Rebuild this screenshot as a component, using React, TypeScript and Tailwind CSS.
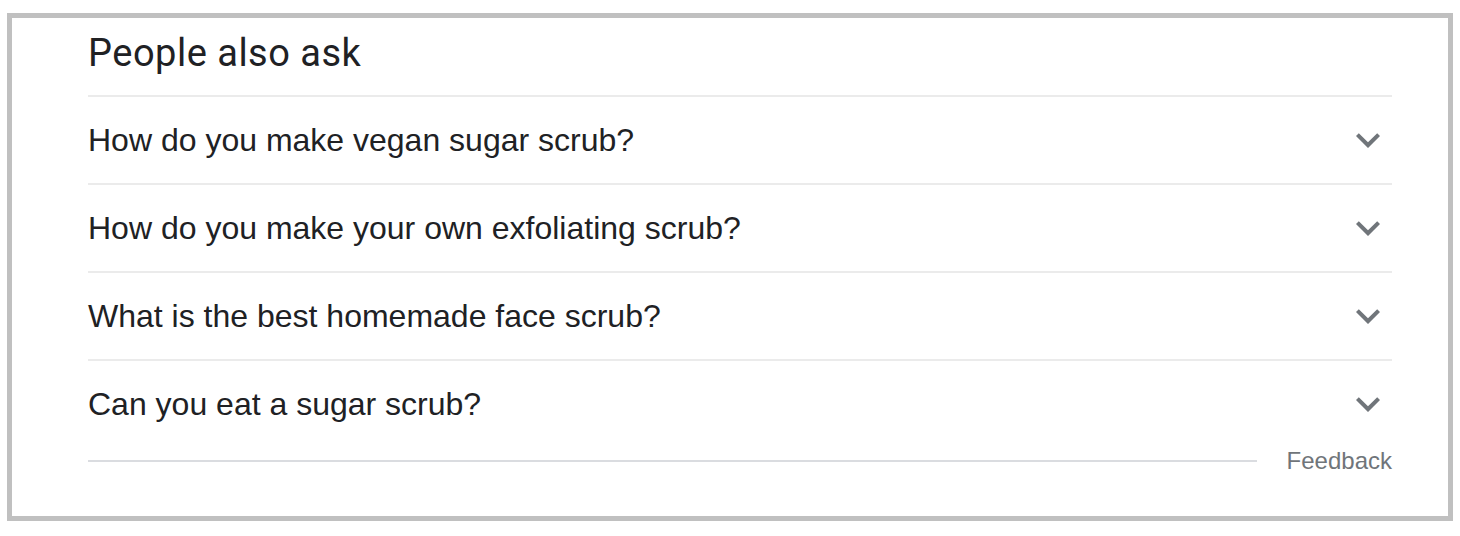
import React from "react";

const questions = [
  "How do you make vegan sugar scrub?",
  "How do you make your own exfoliating scrub?",
  "What is the best homemade face scrub?",
  "Can you eat a sugar scrub?",
];

function Chevron() {
  return (
    <svg width="48" height="48" viewBox="0 0 24 24" className="shrink-0">
      <path d="M16.59 8.59L12 13.17 7.41 8.59 6 10l6 6 6-6z" fill="#70757a" />
    </svg>
  );
}

export default function App() {
  return (
    <div className="min-h-[536px] w-[1460px] bg-white pt-[13px] pl-[7px]">
      <div className="w-[1446px] h-[508px] border-[5px] border-[#c0c0c0] bg-white pl-[76px] pr-[56px]">
        <div
          className="h-[77px] flex items-start pt-[11px] text-[38px] tracking-[0.5px] leading-[48px] text-[#202124]"
          style={{ fontFamily: "Roboto, 'Open Sans', sans-serif" }}
        >
          People also ask
        </div>
        <div style={{ fontFamily: "'Liberation Sans', Arial, sans-serif" }}>
          {questions.map((q) => (
            <div
              key={q}
              className="h-[88px] border-t-[2px] border-[#ebebeb] flex items-center justify-between"
            >
              <span className="text-[32px] leading-[36px] text-[#202124]">{q}</span>
              <Chevron />
            </div>
          ))}
          <div className="flex items-center h-[28px]">
            <div className="flex-1 h-[2px] bg-[#dadce0]" />
            <span className="ml-[30px] text-[24px] leading-[26px] text-[#70757a]">Feedback</span>
          </div>
        </div>
      </div>
    </div>
  );
}
